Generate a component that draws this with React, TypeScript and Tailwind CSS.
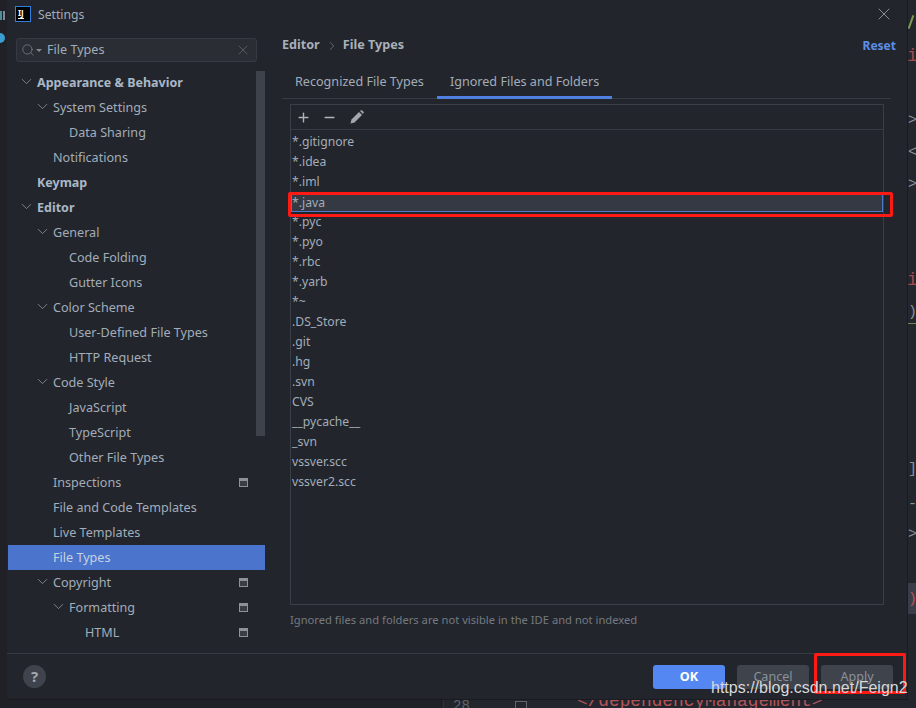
import React from "react";
import { ChevronDown, ChevronRight, Minus, Plus, Search, X } from "lucide-react";
import cn from "clsx";

interface TreeItem {
  label: string;
  depth: number;
  bold?: boolean;
  open?: boolean;
  project?: boolean;
  selected?: boolean;
}

const treeItems: TreeItem[] = [
  { label: "Appearance & Behavior", depth: 0, bold: true, open: true },
  { label: "System Settings", depth: 1, open: true },
  { label: "Data Sharing", depth: 2 },
  { label: "Notifications", depth: 1 },
  { label: "Keymap", depth: 0, bold: true },
  { label: "Editor", depth: 0, bold: true, open: true },
  { label: "General", depth: 1, open: true },
  { label: "Code Folding", depth: 2 },
  { label: "Gutter Icons", depth: 2 },
  { label: "Color Scheme", depth: 1, open: true },
  { label: "User-Defined File Types", depth: 2 },
  { label: "HTTP Request", depth: 2 },
  { label: "Code Style", depth: 1, open: true },
  { label: "JavaScript", depth: 2 },
  { label: "TypeScript", depth: 2 },
  { label: "Other File Types", depth: 2 },
  { label: "Inspections", depth: 1, project: true },
  { label: "File and Code Templates", depth: 1 },
  { label: "Live Templates", depth: 1 },
  { label: "File Types", depth: 1, selected: true },
  { label: "Copyright", depth: 1, open: true, project: true },
  { label: "Formatting", depth: 2, open: true, project: true },
  { label: "HTML", depth: 3, project: true },
];

const ignored = [
  "*.gitignore",
  "*.idea",
  "*.iml",
  "*.java",
  "*.pyc",
  "*.pyo",
  "*.rbc",
  "*.yarb",
  "*~",
  ".DS_Store",
  ".git",
  ".hg",
  ".svn",
  "CVS",
  "__pycache__",
  "_svn",
  "vssver.scc",
  "vssver2.scc",
];

const indentClass = ["pl-[29px]", "pl-[45px]", "pl-[61px]", "pl-[77px]"];
const chevronClass = ["left-[10px]", "left-[26px]", "left-[42px]", "left-[58px]"];

const ProjectIcon: React.FC = () => (
  <span className="absolute right-[17px] top-[8px] h-[9px] w-[9px] border border-t-[3px] border-[#8d9298] bg-[#3a3d44]" />
);

const TreeRow: React.FC<{ item: TreeItem }> = ({ item }) => (
  <div
    className={cn(
      "relative h-[25px] leading-[25px] whitespace-nowrap",
      indentClass[item.depth],
      item.bold ? "text-[12.5px] font-bold text-[#a9b7c6]" : "text-[#a2adb9]",
      item.selected && "bg-[#4b74cc] text-[#c8d3e0]"
    )}
  >
    {item.open && (
      <ChevronDown
        size={17}
        strokeWidth={1.2}
        className={cn("absolute top-[3px] text-[#8b9198]", chevronClass[item.depth])}
      />
    )}
    {item.label}
    {item.project && <ProjectIcon />}
  </div>
);

const FooterButton: React.FC<{ label: string; primary?: boolean }> = ({ label, primary }) => (
  <div
    className={cn(
      "flex h-6 w-[72px] items-center justify-center rounded-[3px]",
      primary ? "bg-[#5587f2] font-bold text-white" : "bg-[#3f434b] text-[#8a929b]"
    )}
  >
    {label}
  </div>
);

const PencilIcon: React.FC = () => (
  <svg width="14" height="14" viewBox="0 0 14 14" className="text-[#a4a8ad]">
    <path fill="currentColor" d="M0.5 13.5 L1.5 9.5 L9 2 L12 5 L4.5 12.5 Z" />
    <path fill="currentColor" d="M10 1 L11 0.3 Q11.6 0 12.2 0.5 L13.5 1.8 Q14 2.4 13.6 3 L13 4 Z" />
  </svg>
);

export default function App() {
  return (
    <div className="relative h-[708px] w-[916px] overflow-hidden bg-[#1f2127] font-['Noto_Sans','Open_Sans',sans-serif] text-[12.6px]">
      {/* editor peeking out behind the dialog */}
      <div className="absolute bottom-0 left-[443px] right-0 top-0 border-l border-[#30333a] bg-[#23262d]" />
      <span className="absolute left-[453px] top-[696px] font-['Liberation_Mono',monospace] text-[14px] leading-[20px] text-[#5f656c]">
        28
      </span>
      <span className="absolute left-[515px] top-[701px] h-[8px] w-[12px] border border-[#5f656c]" />
      <span className="absolute left-[577px] top-[691px] font-['Liberation_Mono',monospace] text-[17.8px] leading-[20px] text-[#b4555a]">
        &lt;/dependencyManagement&gt;
      </span>
      <div className="absolute left-[908px] top-[583px] h-[31px] w-2 bg-[#3a3e48]" />
      <div className="absolute left-[908px] top-0 h-[708px] w-2 font-['Liberation_Mono',monospace] text-[15px] leading-[20px] text-[#8c9097]">
        <span className="absolute left-[2px] top-[15px] h-[14px] w-[2px] rotate-[20deg] bg-[#7c9a4e]" />
        <span className="absolute left-[-1px] top-[46px] text-[18px] text-[#a8484c]">i</span>
        <span className="absolute left-0 top-[111px]">&gt;</span>
        <span className="absolute left-0 top-[143px]">&lt;</span>
        <span className="absolute left-0 top-[175px]">&gt;</span>
        <span className="absolute left-[-1px] top-[270px] text-[18px] text-[#a8484c]">i</span>
        <span className="absolute left-0 top-[303px]">)</span>
        <span className="absolute left-0 top-[323px] h-px w-2 bg-[#6d8a48]" />
        <span className="absolute left-0 top-[460px]">]</span>
        <span className="absolute left-0 top-[495px]">-</span>
        <span className="absolute left-0 top-[525px]">&gt;</span>
        <span className="absolute left-0 top-[590px] text-[#b4555a]">)</span>
      </div>

      {/* tool window strip on the left */}
      <span className="absolute left-0 top-[11px] h-[9px] w-[2px] bg-[#4a8f9e]" />
      <span className="absolute left-[3px] top-[11px] h-[9px] w-[2px] bg-[#7a8a96]" />
      <span className="absolute left-[-5px] top-[33px] h-[10px] w-[10px] rounded-full bg-[#3b9dd0]" />

      {/* dialog */}
      <div className="relative ml-[7px] flex h-[700px] w-[901px] flex-col border-r border-b border-[#191b20] bg-[#22252c]">
        <div className="flex h-[30px] shrink-0 items-center pl-2 pr-[13px]">
          <div className="relative h-4 w-4 -translate-y-px border border-[#2f7fe0] bg-black">
            <span className="absolute left-[2px] top-[1px] text-[8px] font-bold leading-[9px] text-white">IJ</span>
            <span className="absolute bottom-[2px] left-[2px] h-px w-[6px] bg-white" />
          </div>
          <span className="ml-[7px] text-[12.2px] text-[#a4adb7]">Settings</span>
          <X size={20} strokeWidth={0.9} className="ml-auto -translate-y-px text-[#b0b4b9]" />
        </div>

        <div className="flex min-h-0 flex-1">
          {/* left tree */}
          <div className="relative w-[258px] shrink-0 pl-px">
            <div className="mx-2 mt-2 flex h-6 w-[241px] items-center rounded-[3px] border border-[#363a42] bg-[#2a2d34] pl-[4px] pr-[5px] text-[#a2adb9]">
              <Search size={14} strokeWidth={1.2} className="text-[#848a91]" />
              <span className="ml-[1px] h-0 w-0 border-x-[3px] border-t-[3px] border-x-transparent border-t-[#848a91]" />
              <span className="ml-[5px]">File Types</span>
              <X size={16} strokeWidth={1} className="ml-auto text-[#6d7279]" />
            </div>
            <div className="mt-2">
              {treeItems.map((item) => (
                <TreeRow key={item.label} item={item} />
              ))}
            </div>
            <div className="absolute right-0 top-[41px] h-[365px] w-[9px] bg-[#3e424a]" />
          </div>

          {/* right panel */}
          <div className="flex min-w-0 flex-1 flex-col pl-[17px] pr-[16px]">
            <div className="flex h-[29px] shrink-0 items-center pt-[2px] font-bold text-[#a9b0b8]">
              <span>Editor</span>
              <ChevronRight size={14} strokeWidth={1.1} className="ml-[5px] mr-[4px] text-[#8b9198]" />
              <span>File Types</span>
              <span className="-mr-[5px] ml-auto text-[12px] text-[#5c8fe6]">Reset</span>
            </div>
            <div className="mt-[11px] flex h-[29px] shrink-0 border-b border-[#373b43] pl-[13px] text-[#a2adb9]">
              <div className="h-[29px] leading-[24px]">Recognized File Types</div>
              <div className="ml-[13px] h-[29px] w-[175px] border-b-[3px] border-[#4f80e1] pl-[13px] leading-[24px]">
                Ignored Files and Folders
              </div>
            </div>
            <div className="ml-2 mt-[5px] flex h-[501px] w-[594px] shrink-0 flex-col border border-[#3a3e46]">
              <div className="flex h-[25px] shrink-0 items-center border-b border-[#373b43] pl-[5px] text-[#b0b4b9]">
                <Plus size={15} strokeWidth={2.2} />
                <Minus size={15} strokeWidth={2.2} className="ml-[11px]" />
                <span className="ml-[13px]">
                  <PencilIcon />
                </span>
              </div>
              <div className="pt-[2px] text-[12.2px]">
                {ignored.map((name) => (
                  <div
                    key={name}
                    className={cn(
                      "h-5 leading-[20px] text-[#a2adb9]",
                      name === "*.java" ? "border border-[#4f78c9] bg-[#343944] leading-[17px]" : "pl-px"
                    )}
                  >
                    {name}
                  </div>
                ))}
              </div>
            </div>
            <div className="ml-2 mt-[7px] text-[11.2px] leading-[16px] text-[#757a80]">
              Ignored files and folders are not visible in the IDE and not indexed
            </div>
          </div>
        </div>

        {/* footer */}
        <div className="flex h-[46px] shrink-0 items-start border-t border-[#373b43] pl-4 pr-[14px] pt-[11px]">
          <div className="flex h-[23px] w-[23px] items-center justify-center rounded-full bg-[#3f434b] text-[15px] font-bold text-[#a4a8ad]">
            ?
          </div>
          <div className="ml-auto flex gap-3">
            <FooterButton label="OK" primary />
            <FooterButton label="Cancel" />
            <FooterButton label="Apply" />
          </div>
        </div>
      </div>

      {/* red annotation boxes drawn over the screenshot */}
      <div className="absolute left-[288px] top-[192px] h-[25px] w-[605px] rounded-[2px] border-[3px] border-[#fb1b14]" />
      <div className="absolute left-[814px] top-[653px] h-[41px] w-[92px] rounded-[2px] border-[3px] border-[#fb1b14]" />

      {/* watermark */}
      <span className="absolute left-[711px] top-[678px] font-['Liberation_Sans',sans-serif] text-[16px] leading-[20px] text-[#d6d8da]">
        https://blog.csdn.net/Feign2
      </span>
    </div>
  );
}
